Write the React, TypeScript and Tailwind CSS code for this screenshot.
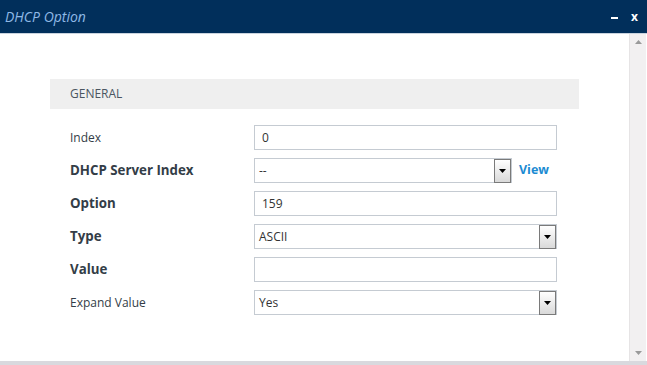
import React from 'react';

type Row = {
  label: string;
  bold?: boolean;
  kind: 'input' | 'select';
  value: string;
  view?: boolean;
};

const rows: Row[] = [
  { label: 'Index', kind: 'input', value: '0' },
  { label: 'DHCP Server Index', bold: true, kind: 'select', value: '--', view: true },
  { label: 'Option', bold: true, kind: 'input', value: '159' },
  { label: 'Type', bold: true, kind: 'select', value: 'ASCII' },
  { label: 'Value', bold: true, kind: 'input', value: '' },
  { label: 'Expand Value', kind: 'select', value: 'Yes' },
];

function DropArrow(): React.JSX.Element {
  return (
    <div className="w-[17px] h-[24px] border border-[#7a7a7a] bg-gradient-to-b from-white to-[#d9d9d9] flex items-center justify-center">
      <svg width="7" height="4" viewBox="0 0 7 4">
        <path d="M0 0 H7 L3.5 4 Z" fill="#000" />
      </svg>
    </div>
  );
}

function Field({ row }: { row: Row }): React.JSX.Element {
  const width = row.view ? 'w-[258px]' : 'w-[303px]';
  const pad = row.kind === 'select' ? 'pl-[4px]' : 'pl-[7px]';
  return (
    <div className="flex items-center">
      <div className={`h-[25px] ${width} ${pad} border border-[#c5cbd2] bg-white flex items-center justify-between`}>
        <span className="text-[12px] text-[#333] leading-none">{row.value}</span>
        {row.kind === 'select' && <DropArrow />}
      </div>
      {row.view && (
        <span className="ml-[7px] text-[12.5px] font-bold text-[#1b8bd2]">View</span>
      )}
    </div>
  );
}

export default function App(): React.JSX.Element {
  return (
    <div className="w-[647px] h-[365px] bg-white flex flex-col overflow-hidden font-['Open_Sans',sans-serif]">
      <div className="h-[34px] bg-[#012f5b] flex items-center justify-between pl-[5px] pr-[9px] border-b border-[#c9d3de]">
        <span className="text-[14px] italic text-[#8fb9e6]">DHCP Option</span>
        <div className="flex items-center gap-[13px] text-white font-bold text-[12px]">
          <span className="block w-[7px] h-[2px] bg-white mt-[3px]" />
          <span className="leading-none">x</span>
        </div>
      </div>

      <div className="flex flex-1 min-h-0">
        <div className="flex-1 pt-[45px] pl-[50px]">
          <div className="w-[529px] h-[30px] bg-[#efefef] flex items-center pl-[20px]">
            <span className="text-[12px] text-[#4a5560]">GENERAL</span>
          </div>
          <div className="mt-[16px] flex flex-col gap-[8px]">
            {rows.map((r) => (
              <div key={r.label} className="flex items-center">
                <div
                  className={`w-[204px] pl-[20px] text-[#333d47] ${r.bold ? 'font-bold text-[13.3px]' : 'text-[12px]'}`}
                >
                  {r.label}
                </div>
                <Field row={r} />
              </div>
            ))}
          </div>
        </div>

        <div className="w-[17px] mr-[1px] bg-[#f2f0f1] border-l border-[#e6e4e5] flex flex-col items-center justify-between py-[6px]">
          <svg width="7" height="4" viewBox="0 0 7 4">
            <path d="M3.5 0 L7 4 H0 Z" fill="#9a9a9a" />
          </svg>
          <svg width="7" height="4" viewBox="0 0 7 4">
            <path d="M0 0 H7 L3.5 4 Z" fill="#9a9a9a" />
          </svg>
        </div>
      </div>

      <div className="h-[4px] bg-[#d9d9de]" />
    </div>
  );
}
